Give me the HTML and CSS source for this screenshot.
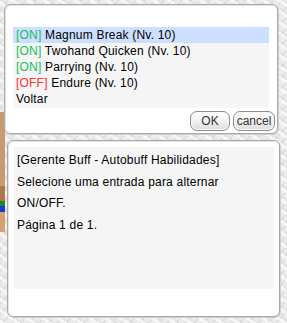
FILE: index.html
```html
<!DOCTYPE html>
<html lang="pt">
<head>
    <meta charset="UTF-8">
    <title>Gerente Buff</title>
    <link rel="stylesheet" href="styles.css">
</head>
<body>
    <div class="edge"></div>
    <div class="win menu">
        <ul class="list">
            <li class="sel"><span class="on">[ON]</span> Magnum Break (Nv. 10)</li>
            <li><span class="on">[ON]</span> Twohand Quicken (Nv. 10)</li>
            <li><span class="on">[ON]</span> Parrying (Nv. 10)</li>
            <li><span class="off">[OFF]</span> Endure (Nv. 10)</li>
            <li>Voltar</li>
        </ul>
        <div class="btns">
            <button class="btn ok">OK</button>
            <button class="btn">cancel</button>
        </div>
    </div>
    <div class="win dialog">
        <div class="text">
            <p>[Gerente Buff - Autobuff Habilidades]</p>
            <p>Selecione uma entrada para alternar</p>
            <p>ON/OFF.</p>
            <p>Página 1 de 1.</p>
        </div>
    </div>
</body>
</html>
```

FILE: styles.css
```css
body {
    margin: 0;
    width: 287px;
    height: 323px;
    overflow: hidden;
    position: relative;
    font-family: "Liberation Sans", Arial, sans-serif;
    font-size: 12px;
    letter-spacing: 0.2px;
    color: #000;
    background:
        repeating-linear-gradient(35deg, rgba(255,255,255,0.6) 0 3px, rgba(200,200,200,0.22) 3px 5px, rgba(255,255,255,0) 5px 9px),
        repeating-linear-gradient(-50deg, rgba(180,180,180,0.2) 0 2px, rgba(255,255,255,0) 2px 7px),
        #ececec;
}
.edge {
    position: absolute;
    left: 0;
    top: 112px;
    width: 5px;
    height: 120px;
    background: linear-gradient(#c89a70 0 62%, #b07848 62% 74%, #1a8a2a 74% 78%, #1040d0 78% 83%, #d8a070 83%);
}
.win {
    position: relative;
    background: #fff;
    border: 1px solid #a8a8a8;
    border-radius: 6px;
    box-shadow: 1px 1px 0 #d0d0d0, inset 1px 1px 0 #e4e4e4;
    box-sizing: border-box;
}
.menu {
    margin: 4px 0 0 4px;
    width: 274px;
    height: 130px;
    padding: 22px 0 0 8px;
}
.list {
    list-style: none;
    margin: 0;
    padding: 0;
    width: 256px;
    height: 81px;
    background: #f5f5f5;
}
.list li {
    height: 16px;
    line-height: 16px;
    padding-left: 3px;
    white-space: nowrap;
}
.list li.sel {
    background: #cddfff;
}
.on {
    color: #14c060;
}
.off {
    color: #ff3434;
}
.btns {
    display: flex;
    justify-content: flex-end;
    gap: 3px;
    margin: 3px 2px 0 0;
}
.btn {
    height: 20px;
    padding: 0;
    font-family: "Liberation Sans", Arial, sans-serif;
    font-size: 12px;
    color: #333;
    border: 1px solid #8c8c8c;
    border-radius: 7px;
    background: linear-gradient(#ffffff, #f2f2f2 50%, #dcdcdc);
    box-shadow: inset 0 0 0 1px #fafafa;
}
.btn.ok {
    width: 40px;
}
.btn:not(.ok) {
    width: 42px;
}
.dialog {
    margin: 6px 0 0 7px;
    width: 273px;
    height: 177px;
    padding: 6px 0 0 6px;
}
.text {
    width: 260px;
    height: 142px;
    background: #f5f5f5;
    padding: 3px 0 0 3px;
    box-sizing: border-box;
}
.text p {
    margin: 0;
    line-height: 21.5px;
}
```
